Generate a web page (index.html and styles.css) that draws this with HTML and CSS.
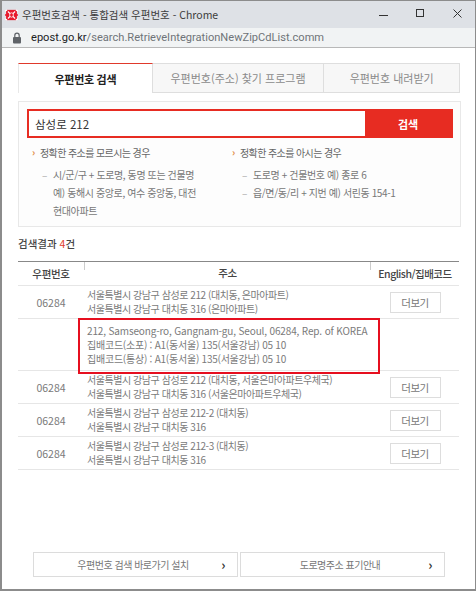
FILE: index.html
```html
<!DOCTYPE html>
<html lang="ko">
<head>
<meta charset="utf-8">
<title>우편번호검색</title>
<link rel="stylesheet" href="styles.css">
</head>
<body>
<div class="window">
  <div class="titlebar">
    <svg class="favicon" width="13" height="12" viewBox="0 0 18 14" preserveAspectRatio="none"><rect x="1.5" y="1" width="15" height="12" fill="#e8192c"/><path d="M0 2.5 3 1M18 2.5 15 1M0 11.5 3 13M18 11.5 15 13M4 3l10 8M14 3 4 11" stroke="#fff" stroke-width="1.5" fill="none"/><path d="M0 7h3M15 7h3" stroke="#e8192c" stroke-width="2"/><circle cx="9" cy="7" r="2.6" fill="#e8192c" stroke="#fff" stroke-width="1"/></svg>
    <span class="title">우편번호검색 - 통합검색 우편번호 - Chrome</span>
    <div class="controls">
      <svg width="14" height="14" viewBox="0 0 14 14"><path d="M2 7.5h9" stroke="#333" fill="none"/></svg>
      <svg width="14" height="14" viewBox="0 0 14 14"><rect x="2.5" y="1.5" width="7" height="7" stroke="#333" fill="none"/></svg>
      <svg width="14" height="14" viewBox="0 0 14 14"><path d="M2.5 1.5l8 8M10.5 1.5l-8 8" stroke="#333" fill="none"/></svg>
    </div>
  </div>
  <div class="addressbar">
    <svg width="10" height="12" viewBox="0 0 10 12"><rect x="1" y="5" width="8" height="6.5" rx="1" fill="#5f6368"/><path d="M2.8 5V3.4a2.2 2.2 0 0 1 4.4 0V5" stroke="#5f6368" stroke-width="1.2" fill="none"/></svg>
    <span class="url"><span class="host">epost.go.kr</span>/search.RetrieveIntegrationNewZipCdList.comm</span>
  </div>
  <div class="content">
    <nav class="tabs">
      <div class="tab tab-active">우편번호 검색</div>
      <div class="tab tab-wide">우편번호(주소) 찾기 프로그램</div>
      <div class="tab tab-last">우편번호 내려받기</div>
    </nav>
    <section class="panel">
      <div class="search">
        <div class="search-input">삼성로 212</div>
        <div class="search-button">검색</div>
      </div>
      <div class="tips">
        <div class="tip-col tip-left">
          <h3 class="tip-head">정확한 주소를 모르시는 경우</h3>
          <p class="tip-item">시/군/구 + 도로명, 동명 또는 건물명<br>예) 동해시 중앙로, 여수 중앙동, 대전<br>현대아파트</p>
        </div>
        <div class="tip-col">
          <h3 class="tip-head">정확한 주소를 아시는 경우</h3>
          <p class="tip-item">도로명 + 건물번호 예) 종로 6</p>
          <p class="tip-item">읍/면/동/리 + 지번 예) 서린동 154-1</p>
        </div>
      </div>
    </section>
    <h2 class="result-head">검색결과 <em class="count">4</em>건</h2>
    <div class="results">
      <div class="row row-head">
        <div class="cell-zip">우편번호</div>
        <div class="cell-addr">주소</div>
        <div class="cell-more">English/집배코드</div>
      </div>
      <div class="row">
        <div class="cell-zip">06284</div>
        <div class="cell-addr"><p>서울특별시 강남구 삼성로 212 (대치동, 은마아파트)</p><p>서울특별시 강남구 대치동 316 (은마아파트)</p></div>
        <div class="cell-more"><span class="more">더보기</span></div>
      </div>
      <div class="row row-detail">
        <div class="cell-zip"></div>
        <div class="cell-addr"><p class="latin">212, Samseong-ro, Gangnam-gu, Seoul, 06284, Rep. of KOREA</p><p>집배코드(소포) : A1(동서울) 135(서울강남) 05 10</p><p>집배코드(통상) : A1(동서울) 135(서울강남) 05 10</p><div class="highlight"></div></div>
        <div class="cell-more"></div>
      </div>
      <div class="row">
        <div class="cell-zip">06284</div>
        <div class="cell-addr"><p>서울특별시 강남구 삼성로 212 (대치동, 서울은마아파트우체국)</p><p>서울특별시 강남구 대치동 316 (서울은마아파트우체국)</p></div>
        <div class="cell-more"><span class="more">더보기</span></div>
      </div>
      <div class="row">
        <div class="cell-zip">06284</div>
        <div class="cell-addr"><p>서울특별시 강남구 삼성로 212-2 (대치동)</p><p>서울특별시 강남구 대치동 316</p></div>
        <div class="cell-more"><span class="more">더보기</span></div>
      </div>
      <div class="row">
        <div class="cell-zip">06284</div>
        <div class="cell-addr"><p>서울특별시 강남구 삼성로 212-3 (대치동)</p><p>서울특별시 강남구 대치동 316</p></div>
        <div class="cell-more"><span class="more">더보기</span></div>
      </div>
    </div>
    <div class="footer-links">
      <div class="link">우편번호 검색 바로가기 설치<span class="chev">›</span></div>
      <div class="link">도로명주소 표기안내<span class="chev">›</span></div>
    </div>
  </div>
</div>
</body>
</html>
```
FILE: styles.css
```css
* { box-sizing: border-box; }
html, body { margin: 0; padding: 0; background: #fff; }
body { width: 476px; height: 593px; overflow: hidden; font-family: "Noto Sans CJK KR", "Noto Sans", sans-serif; color: #666; font-size: 10px; }
.window { width: 476px; height: 591px; border: solid #8c8c8c; border-width: 1px 1px 2px 2px; display: flex; flex-direction: column; background: #fff; }
.titlebar { height: 27px; flex: none; background: #dee1e6; display: flex; align-items: center; padding-left: 3px; }
.favicon { flex: none; }
.title { margin-left: 4px; font-size: 10.5px; color: #3c3c3c; }
.controls { margin-left: auto; display: flex; gap: 23px; padding-right: 10px; }
.addressbar { height: 20px; flex: none; background: #f1f3f4; border-bottom: 1px solid #b8b8b8; display: flex; align-items: center; padding-left: 10px; gap: 9px; }
.url { font-family: "Roboto", sans-serif; font-size: 11.1px; color: #6f7478; }
.host { color: #202124; }
.content { flex: 1; padding: 15px 15px 0 16px; display: flex; flex-direction: column; }
.tabs { display: flex; height: 30px; flex: none; }
.tab { display: flex; align-items: center; justify-content: center; background: #f7f7f7; border: 1px solid #dedede; border-left: 0; font-size: 11px; color: #8a8a8a; }
.tab-active { width: 135px; background: #fff; border-top: 1px solid #e0392b; border-bottom: 0; border-left: 1px solid #e8e8e8; font-weight: 700; color: #222; letter-spacing: -0.3px; }
.tab-wide { width: 172px; }
.tab-last { width: 136px; }
.panel { margin-top: 8px; width: 443px; height: 126px; border: 1px solid #e8e8e8; background: #fdfdfd; padding: 7px 7px 0 8px; }
.search { display: flex; height: 29px; border: 2px solid #e72c22; background: #fff; }
.search-input { flex: 1; display: flex; align-items: center; padding-left: 6px; font-size: 11.5px; color: #333; }
.search-button { width: 86px; background: #e72c22; color: #fff; font-weight: 700; font-size: 11px; display: flex; align-items: center; justify-content: center; }
.tips { display: flex; margin-top: 6px; padding-left: 5px; }
.tip-col { flex: none; }
.tip-left { width: 200px; }
.tip-head { margin: 0 0 4px; font-size: 10px; letter-spacing: -0.6px; font-weight: 400; color: #666; line-height: 18px; padding-left: 8px; position: relative; }
.tip-head::before { content: "›"; position: absolute; left: 0; top: -1px; color: #e08a3c; font-weight: 700; }
.tip-item { margin: 0; font-size: 10px; letter-spacing: -0.4px; line-height: 18px; padding-left: 21px; position: relative; color: #777; }
.tip-item::before { content: "–"; position: absolute; left: 10px; top: 0; color: #aaa; }
.result-head { margin: 8px 0 0; font-size: 10.5px; font-weight: 500; color: #444; line-height: 18px; }
.count { font-style: normal; color: #e0392b; font-weight: 400; }
.results { margin-top: 8px; width: 441px; border-top: 1px solid #888; }
.row { display: grid; grid-template-columns: 66px 287px 88px; align-items: center; border-bottom: 1px solid #e6e6e6; height: 33px; font-size: 10px; letter-spacing: -0.45px; color: #7a7a7a; }
.row-head { height: 24px; color: #444; font-size: 10.5px; font-weight: 500; text-align: center; letter-spacing: -0.5px; padding-bottom: 1px; }
.row-head .cell-addr { padding: 0; text-align: center; }
.row-head .cell-addr::before, .row-head .cell-addr::after { content: ""; position: absolute; top: -4px; height: 8px; width: 1px; background: #ccc; }
.row-head .cell-addr::before { left: 0; }
.row-head .cell-addr::after { right: 0; }
.row-detail { height: 52px; }
.cell-zip { text-align: center; }
.row .cell-zip { font-size: 10.5px; letter-spacing: 0; }
.row-head .cell-zip { letter-spacing: -0.3px; }
.cell-addr { padding: 0 0 1px 3px; position: relative; line-height: 14px; }
.cell-addr p { margin: 0; white-space: nowrap; }
.row-detail .cell-addr { padding-bottom: 0; letter-spacing: -0.24px; }
.row-detail .latin { letter-spacing: -0.15px; }
.cell-more { text-align: center; white-space: nowrap; }
.more { display: inline-block; width: 51px; height: 21px; line-height: 19px; border: 1px solid #ddd; color: #777; font-size: 10.5px; }
.highlight { position: absolute; left: -6px; top: -6px; width: 302px; height: 56px; border: 2px solid #e60f1f; }
.footer-links { display: flex; gap: 2px; margin: auto 0 12px 15px; }
.link { width: 205px; height: 25px; border: 1px solid #dcdcdc; display: flex; align-items: center; justify-content: center; font-size: 10px; letter-spacing: -0.5px; color: #777; position: relative; padding-right: 5px; }
.chev { position: absolute; right: 12px; top: 2px; font-weight: 700; color: #333; font-size: 13px; }
```
